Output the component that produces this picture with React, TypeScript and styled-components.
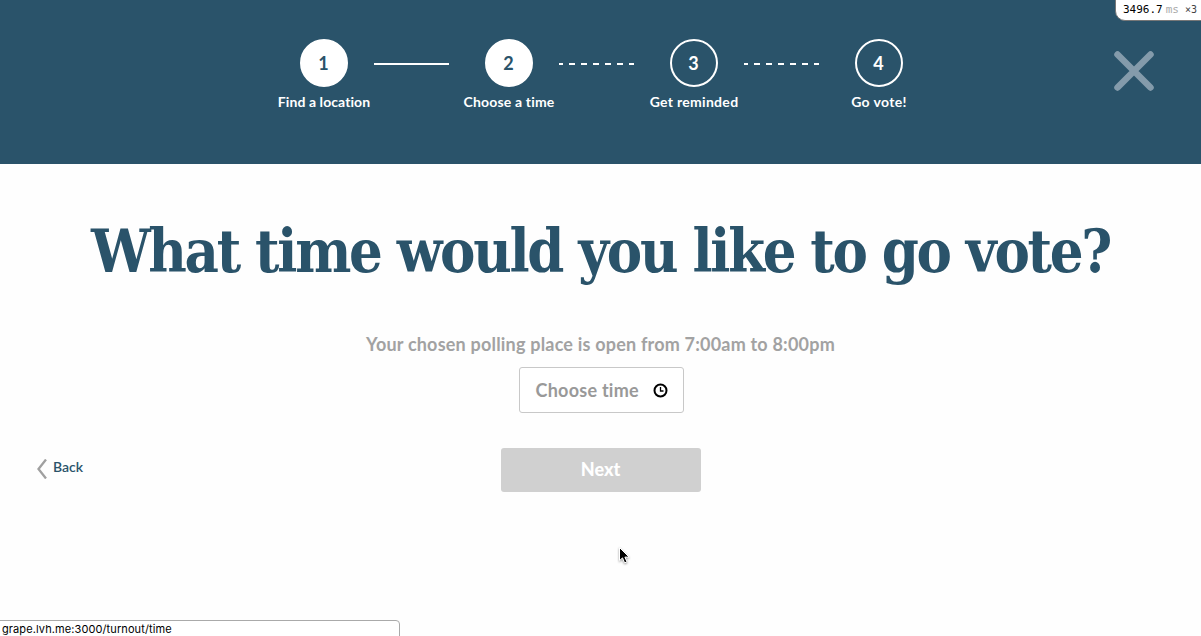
import React from "react";
import styled, { createGlobalStyle } from "styled-components";

const navy = "#2a536a";

const GlobalStyle = createGlobalStyle`
  *, *::before, *::after { box-sizing: border-box; }
  html, body { margin: 0; background: #fefefe; overflow: hidden; }
  body {
    font-family: Lato, "Open Sans", sans-serif;
    font-variant-ligatures: none;
    color: ${navy};
  }
  button { font-family: inherit; margin: 0; cursor: default; }
`;

const Page = styled.div`
  position: relative;
  display: flex;
  flex-direction: column;
  width: 100%;
  height: 100vh;
  overflow: hidden;
`;

const Header = styled.header`
  flex: none;
  height: 164px;
  padding-top: 39px;
  background: ${navy};
`;

const Steps = styled.ol`
  display: flex;
  justify-content: center;
  list-style: none;
  margin: 0;
  padding: 0 0 0 2px;
`;

const Step = styled.li`
  display: flex;
  flex-direction: column;
  align-items: center;
  width: 48px;
`;

const StepNumber = styled.span<{ $filled: boolean }>`
  display: flex;
  align-items: center;
  justify-content: center;
  flex: none;
  width: 48px;
  height: 48px;
  padding-right: 1px;
  border: 2px solid #fff;
  border-radius: 50%;
  background: ${(p) => (p.$filled ? "#fff" : "transparent")};
  color: ${(p) => (p.$filled ? navy : "#fff")};
  font-size: 18px;
  font-weight: 700;
  line-height: 24px;
`;

const StepLabel = styled.span<{ $spacing: number }>`
  margin-top: 5px;
  color: #fff;
  font-size: 14px;
  font-weight: 700;
  line-height: 20px;
  letter-spacing: ${(p) => p.$spacing}px;
  white-space: nowrap;
`;

const Connector = styled.li<{ $dashed: boolean }>`
  width: 75px;
  height: 2px;
  margin: 24px 36px 0 26px;
  background: ${(p) =>
    p.$dashed
      ? "repeating-linear-gradient(to right, #fff 0 6px, transparent 6px 12px) -2px 0 / 84px 2px"
      : "#fff"};
`;

const Close = styled.button`
  position: absolute;
  top: 50px;
  right: 46px;
  width: 42px;
  height: 42px;
  padding: 0;
  border: 0;
  background: none;
  svg { display: block; }
`;

const Timing = styled.div`
  position: absolute;
  top: -1px;
  right: -1px;
  display: flex;
  align-items: baseline;
  width: 87px;
  height: 22px;
  padding: 1px 0 0 7px;
  border: 1px solid #777;
  border-radius: 0 0 0 10px;
  background: #fff;
  color: #000;
  font: 11px/18px "DejaVu Sans Mono", monospace;
`;

const Unit = styled.span`
  margin-left: 3px;
  color: #aaa;
`;

const Count = styled.span`
  margin-left: 6px;
  color: #444;
  font-size: 10px;
`;

const Main = styled.main`
  display: flex;
  flex-direction: column;
  align-items: center;
`;

const Title = styled.h1`
  margin: 48px 0 0;
  font-family: "DejaVu Serif Condensed", "DejaVu Serif", serif;
  font-stretch: condensed;
  font-size: 59px;
  font-weight: 700;
  line-height: 80px;
  letter-spacing: -2.3px;
  white-space: nowrap;
`;

const Hours = styled.p`
  margin: 39px 0 0;
  color: #a2a2a2;
  font-size: 18px;
  font-weight: 700;
  line-height: 26px;
  letter-spacing: 0.2px;
  white-space: nowrap;
`;

const TimeField = styled.button`
  display: flex;
  align-items: center;
  justify-content: space-between;
  width: 165px;
  height: 46px;
  margin: 10px 0 0 1px;
  padding: 0 15px 0 16px;
  border: 1px solid #c8c8c8;
  border-radius: 3px;
  background: #fff;
  color: #999;
  font-size: 18px;
  font-weight: 700;
  letter-spacing: 0.25px;
  white-space: nowrap;
`;

const Actions = styled.div`
  display: grid;
  grid-template-columns: 1fr 200px 1fr;
  width: 100%;
  margin-top: 35px;
  padding: 0 37px;
`;

const Back = styled.a`
  display: flex;
  align-items: center;
  justify-self: start;
  height: 41px;
  gap: 6px;
  font-size: 14px;
  font-weight: 600;
  line-height: 20px;
  span { padding-bottom: 4px; }
`;

const Next = styled.button`
  height: 44px;
  padding: 0 0 2px;
  border: 0;
  border-radius: 3px;
  background: #d0d0d0;
  color: #fff;
  font-size: 18px;
  font-weight: 900;
`;

const Pointer = styled.svg`
  position: absolute;
  left: 618px;
  top: 546px;
  filter: drop-shadow(0 1px 1px rgba(0, 0, 0, 0.4));
`;

const StatusBar = styled.div`
  position: absolute;
  left: -1px;
  bottom: -1px;
  width: 401px;
  height: 17px;
  padding-left: 2px;
  border: 1px solid #aaa;
  border-radius: 0 4px 0 0;
  background: #fff;
  color: #000;
  font: 11px/17px Inter, sans-serif;
  letter-spacing: 0.1px;
`;

const steps = [
  { label: "Find a location", done: true, spacing: 0.08 },
  { label: "Choose a time", done: true, spacing: 0.16 },
  { label: "Get reminded", done: false, spacing: 0.3 },
  { label: "Go vote!", done: false, spacing: 0.35 },
];

export default function App() {
  return (
    <Page>
      <GlobalStyle />
      <Header>
        <Steps>
          {steps.map((step, i) => (
            <React.Fragment key={step.label}>
              {i > 0 && <Connector $dashed={!step.done} aria-hidden />}
              <Step>
                <StepNumber $filled={step.done}>{i + 1}</StepNumber>
                <StepLabel $spacing={step.spacing}>{step.label}</StepLabel>
              </Step>
            </React.Fragment>
          ))}
        </Steps>
      </Header>
      <Close aria-label="Close">
        <svg width="42" height="42" viewBox="0 0 42 42">
          <path d="M4.5 4.5 37.5 37.5M37.5 4.5 4.5 37.5" fill="none" stroke="#849bab" strokeWidth="6.5" strokeLinecap="round" />
        </svg>
      </Close>
      <Timing>
        3496.7<Unit>ms</Unit><Count>×3</Count>
      </Timing>
      <Main>
        <Title>What time would you like to go vote?</Title>
        <Hours>Your chosen polling place is open from 7:00am to 8:00pm</Hours>
        <TimeField>
          Choose time
          <svg width="15" height="15" viewBox="0 0 15 15" fill="none" stroke="#000">
            <circle cx="7.5" cy="7.5" r="6" strokeWidth="2" />
            <path d="M7.5 4v4h3" strokeWidth="1.3" />
          </svg>
        </TimeField>
        <Actions>
          <Back>
            <svg width="10" height="20" viewBox="0 0 10 20" fill="none" stroke="#a0a0a0" strokeWidth="2.3">
              <path d="M9 .5 1.5 10 9 19.5" />
            </svg>
            <span>Back</span>
          </Back>
          <Next>Next</Next>
        </Actions>
      </Main>
      <Pointer width="13" height="19" viewBox="0 0 13 19">
        <path d="M1.5 1.5v13.2l3-2.8 2.1 5 2.4-1-2.1-4.8h4.2z" fill="#000" stroke="#fff" strokeWidth="1" />
      </Pointer>
      <StatusBar>grape.lvh.me:3000/turnout/time</StatusBar>
    </Page>
  );
}
